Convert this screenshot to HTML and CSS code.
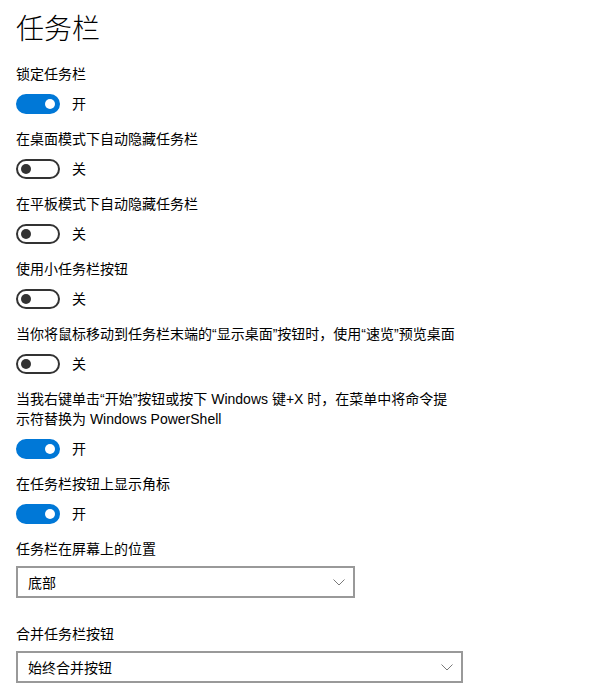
FILE: index.html
```html
<!DOCTYPE html>
<html lang="zh-CN">
<head>
<meta charset="utf-8">
<link rel="stylesheet" href="styles.css">
</head>
<body>
<main class="page">
  <h1 class="title">任务栏</h1>

  <section class="setting">
    <div class="label">锁定任务栏</div>
    <div class="toggle-row"><span class="toggle on"><span class="knob"></span></span><span class="state">开</span></div>
  </section>

  <section class="setting">
    <div class="label">在桌面模式下自动隐藏任务栏</div>
    <div class="toggle-row"><span class="toggle"><span class="knob"></span></span><span class="state">关</span></div>
  </section>

  <section class="setting">
    <div class="label">在平板模式下自动隐藏任务栏</div>
    <div class="toggle-row"><span class="toggle"><span class="knob"></span></span><span class="state">关</span></div>
  </section>

  <section class="setting">
    <div class="label">使用小任务栏按钮</div>
    <div class="toggle-row"><span class="toggle"><span class="knob"></span></span><span class="state">关</span></div>
  </section>

  <section class="setting">
    <div class="label">当你将鼠标移动到任务栏末端的“显示桌面”按钮时，使用“速览”预览桌面</div>
    <div class="toggle-row"><span class="toggle"><span class="knob"></span></span><span class="state">关</span></div>
  </section>

  <section class="setting">
    <div class="label">当我右键单击“开始”按钮或按下 Windows 键+X 时，在菜单中将命令提<br>示符替换为 Windows PowerShell</div>
    <div class="toggle-row"><span class="toggle on"><span class="knob"></span></span><span class="state">开</span></div>
  </section>

  <section class="setting">
    <div class="label">在任务栏按钮上显示角标</div>
    <div class="toggle-row"><span class="toggle on"><span class="knob"></span></span><span class="state">开</span></div>
  </section>

  <section class="setting select-setting">
    <div class="label">任务栏在屏幕上的位置</div>
    <div class="select narrow">
      <span class="select-text">底部</span>
      <svg class="chevron" width="12" height="7" viewBox="0 0 12 7"><path d="M0.5 0.5 L6 6 L11.5 0.5" fill="none" stroke="#7a7a7a" stroke-width="1"/></svg>
    </div>
  </section>

  <section class="setting select-setting last">
    <div class="label">合并任务栏按钮</div>
    <div class="select wide">
      <span class="select-text">始终合并按钮</span>
      <svg class="chevron" width="12" height="7" viewBox="0 0 12 7"><path d="M0.5 0.5 L6 6 L11.5 0.5" fill="none" stroke="#7a7a7a" stroke-width="1"/></svg>
    </div>
  </section>
</main>
</body>
</html>
```
FILE: styles.css
```css
html, body {
  margin: 0;
  padding: 0;
  background: #ffffff;
}

body {
  font-family: "Liberation Sans", "Noto Sans CJK SC", sans-serif;
  color: #000000;
  font-size: 14px;
}

.page {
  padding: 0 16px;
  display: flex;
  flex-direction: column;
}

.title {
  font-family: "Noto Sans CJK SC", sans-serif;
  font-weight: 300;
  font-size: 28px;
  line-height: 40px;
  margin: 7px 0 17px 0;
}

.setting {
  display: flex;
  flex-direction: column;
  gap: 10px;
  margin-bottom: 15px;
}

.label {
  line-height: 20px;
  font-size: 14px;
}

.toggle-row {
  display: flex;
  align-items: center;
  gap: 12px;
  height: 20px;
}

.toggle {
  box-sizing: border-box;
  width: 44px;
  height: 20px;
  border-radius: 10px;
  border: 2px solid #333333;
  display: flex;
  align-items: center;
  padding: 0 3px;
}

.toggle .knob {
  width: 10px;
  height: 10px;
  border-radius: 50%;
  background: #333333;
}

.toggle.on {
  background: #0078d7;
  border-color: #0078d7;
  justify-content: flex-end;
}

.toggle.on .knob {
  background: #ffffff;
}

.state {
  font-size: 14px;
  line-height: 20px;
}

.select-setting {
  gap: 7px;
  margin-bottom: 0;
}

.select-setting.last {
  margin-top: 26px;
}

.select {
  box-sizing: border-box;
  height: 32px;
  border: 2px solid #999999;
  display: flex;
  align-items: center;
  justify-content: space-between;
  padding: 0 8px 0 10px;
}

.select.narrow {
  width: 339px;
}

.select.wide {
  width: 447px;
}

.select-text {
  font-size: 14px;
}

.chevron {
  display: block;
}
```
